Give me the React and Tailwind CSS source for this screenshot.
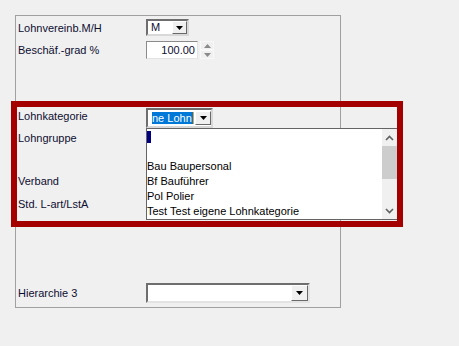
import React from "react";

const font = { fontFamily: '"Liberation Sans", Arial, sans-serif' };

function Arrow({ color = "#000" }) {
  return (
    <svg width="7" height="4" viewBox="0 0 7 4">
      <path d="M0 0h7L3.5 4z" fill={color} />
    </svg>
  );
}

function ComboButton({ className = "" }) {
  return (
    <div
      className={`flex items-center justify-center bg-[#f0f0f0] border border-t-white border-l-white border-r-[#696969] border-b-[#696969] ${className}`}
    >
      <Arrow />
    </div>
  );
}

function Label({ children, className = "" }) {
  return (
    <div className={`w-[128px] shrink-0 text-[11px] leading-[14px] text-[#0e0e30] ${className}`}>
      {children}
    </div>
  );
}

export default function App() {
  return (
    <div className="relative w-[459px] h-[346px] bg-[#f0f0f0] overflow-hidden" style={font}>
      <div className="pt-[15px] pl-[15px]">
        {/* Form panel */}
        <div className="w-[326px] h-[293px] border border-[#a0a0a0] pl-[2px]">
          {/* Lohnvereinb */}
          <div className="flex items-center h-[17px] mt-[3px]">
            <Label>Lohnvereinb.M/H</Label>
            <div className="flex w-[43px] h-[17px] bg-white border-2 border-t-[#6e6e6e] border-l-[#6e6e6e] border-r-[#d8d8d8] border-b-[#d8d8d8]">
              <div className="flex-1 pl-[3px] text-[11px] leading-[13px] text-[#0e0e30]">M</div>
              <ComboButton className="w-[15px] h-[13px]" />
            </div>
          </div>

          {/* Beschäftigungsgrad */}
          <div className="flex items-center h-[18px] mt-[5px]">
            <Label>Beschäf.-grad %</Label>
            <div className="w-[52px] h-[18px] bg-white border border-t-[#8a8a8a] border-l-[#8a8a8a] border-r-[#e3e3e3] border-b-[#e3e3e3] text-right pr-[2px] text-[11px] leading-[16px] text-[#0e0e30]">
              100.00
            </div>
            <div className="ml-[2px] flex flex-col w-[14px] h-[18px]">
              <div className="flex-1 flex items-center justify-center border border-[#f8f8f8]">
                <svg width="7" height="4" viewBox="0 0 7 4">
                  <path d="M0 4h7L3.5 0z" fill="#8a8a8a" />
                </svg>
              </div>
              <div className="flex-1 flex items-center justify-center border border-[#f8f8f8]">
                <Arrow color="#8a8a8a" />
              </div>
            </div>
          </div>

          {/* Lohnkategorie */}
          <div className="flex items-start h-[20px] mt-[49px]">
            <Label className="mt-[1px]">Lohnkategorie</Label>
            <div className="flex items-center w-[67px] h-[20px] bg-white border-2 border-t-[#6e6e6e] border-l-[#6e6e6e] border-r-[#d8d8d8] border-b-[#d8d8d8]">
              <div className="ml-[4px] h-[12px] pr-[1px] bg-[#0078d7] text-white text-[11px] leading-[12px] whitespace-nowrap border-r border-[#f0a030]">
                ne Lohn
              </div>
              <ComboButton className="ml-auto w-[16px] h-[14px]" />
            </div>
          </div>

          <div className="flex h-[14px] mt-[3px]">
            <Label>Lohngruppe</Label>
          </div>
          <div className="flex h-[14px] mt-[29px]">
            <Label>Verband</Label>
          </div>
          <div className="flex h-[14px] mt-[9px]">
            <Label>Std. L-art/LstA</Label>
          </div>

          {/* Hierarchie 3 */}
          <div className="flex items-center h-[20px] mt-[72px]">
            <Label>Hierarchie 3</Label>
            <div className="flex items-center w-[164px] h-[20px] bg-white border-2 border-t-[#6e6e6e] border-l-[#6e6e6e] border-r-[#e3e3e3] border-b-[#e3e3e3]">
              <ComboButton className="ml-auto w-[17px] h-[16px]" />
            </div>
          </div>
        </div>
      </div>

      {/* Open dropdown list */}
      <div className="absolute left-[146px] top-[128px] w-[252px] h-[92px] bg-white border border-[#646464] flex">
        <div className="flex-1 flex flex-col text-[11px] leading-[15px] text-black">
          <div className="h-[15px] flex items-center">
            <div className="w-[4px] h-[12px] bg-[#000080] mt-[1px]" />
          </div>
          <div className="h-[15px]" />
          <div className="h-[15px] whitespace-nowrap">Bau Baupersonal</div>
          <div className="h-[15px] whitespace-nowrap">Bf Bauführer</div>
          <div className="h-[15px] whitespace-nowrap">Pol Polier</div>
          <div className="h-[15px] whitespace-nowrap">Test Test eigene Lohnkategorie</div>
        </div>
        <div className="w-[15px] bg-[#f0f0f0] flex flex-col items-center">
          <div className="h-[17px] flex items-center justify-center">
            <svg width="9" height="6" viewBox="0 0 9 6">
              <path d="M1 5l3.5-3.5L8 5" stroke="#606060" strokeWidth="1.6" fill="none" />
            </svg>
          </div>
          <div className="w-full h-[33px] bg-[#cdcdcd]" />
          <div className="flex-1" />
          <div className="h-[17px] flex items-center justify-center">
            <svg width="9" height="6" viewBox="0 0 9 6">
              <path d="M1 1l3.5 3.5L8 1" stroke="#606060" strokeWidth="1.6" fill="none" />
            </svg>
          </div>
        </div>
      </div>

      {/* Red highlight frame */}
      <div className="absolute left-[11px] top-[101px] w-[392px] h-[126px] border-[6px] border-[#a50000] pointer-events-none" />
    </div>
  );
}
